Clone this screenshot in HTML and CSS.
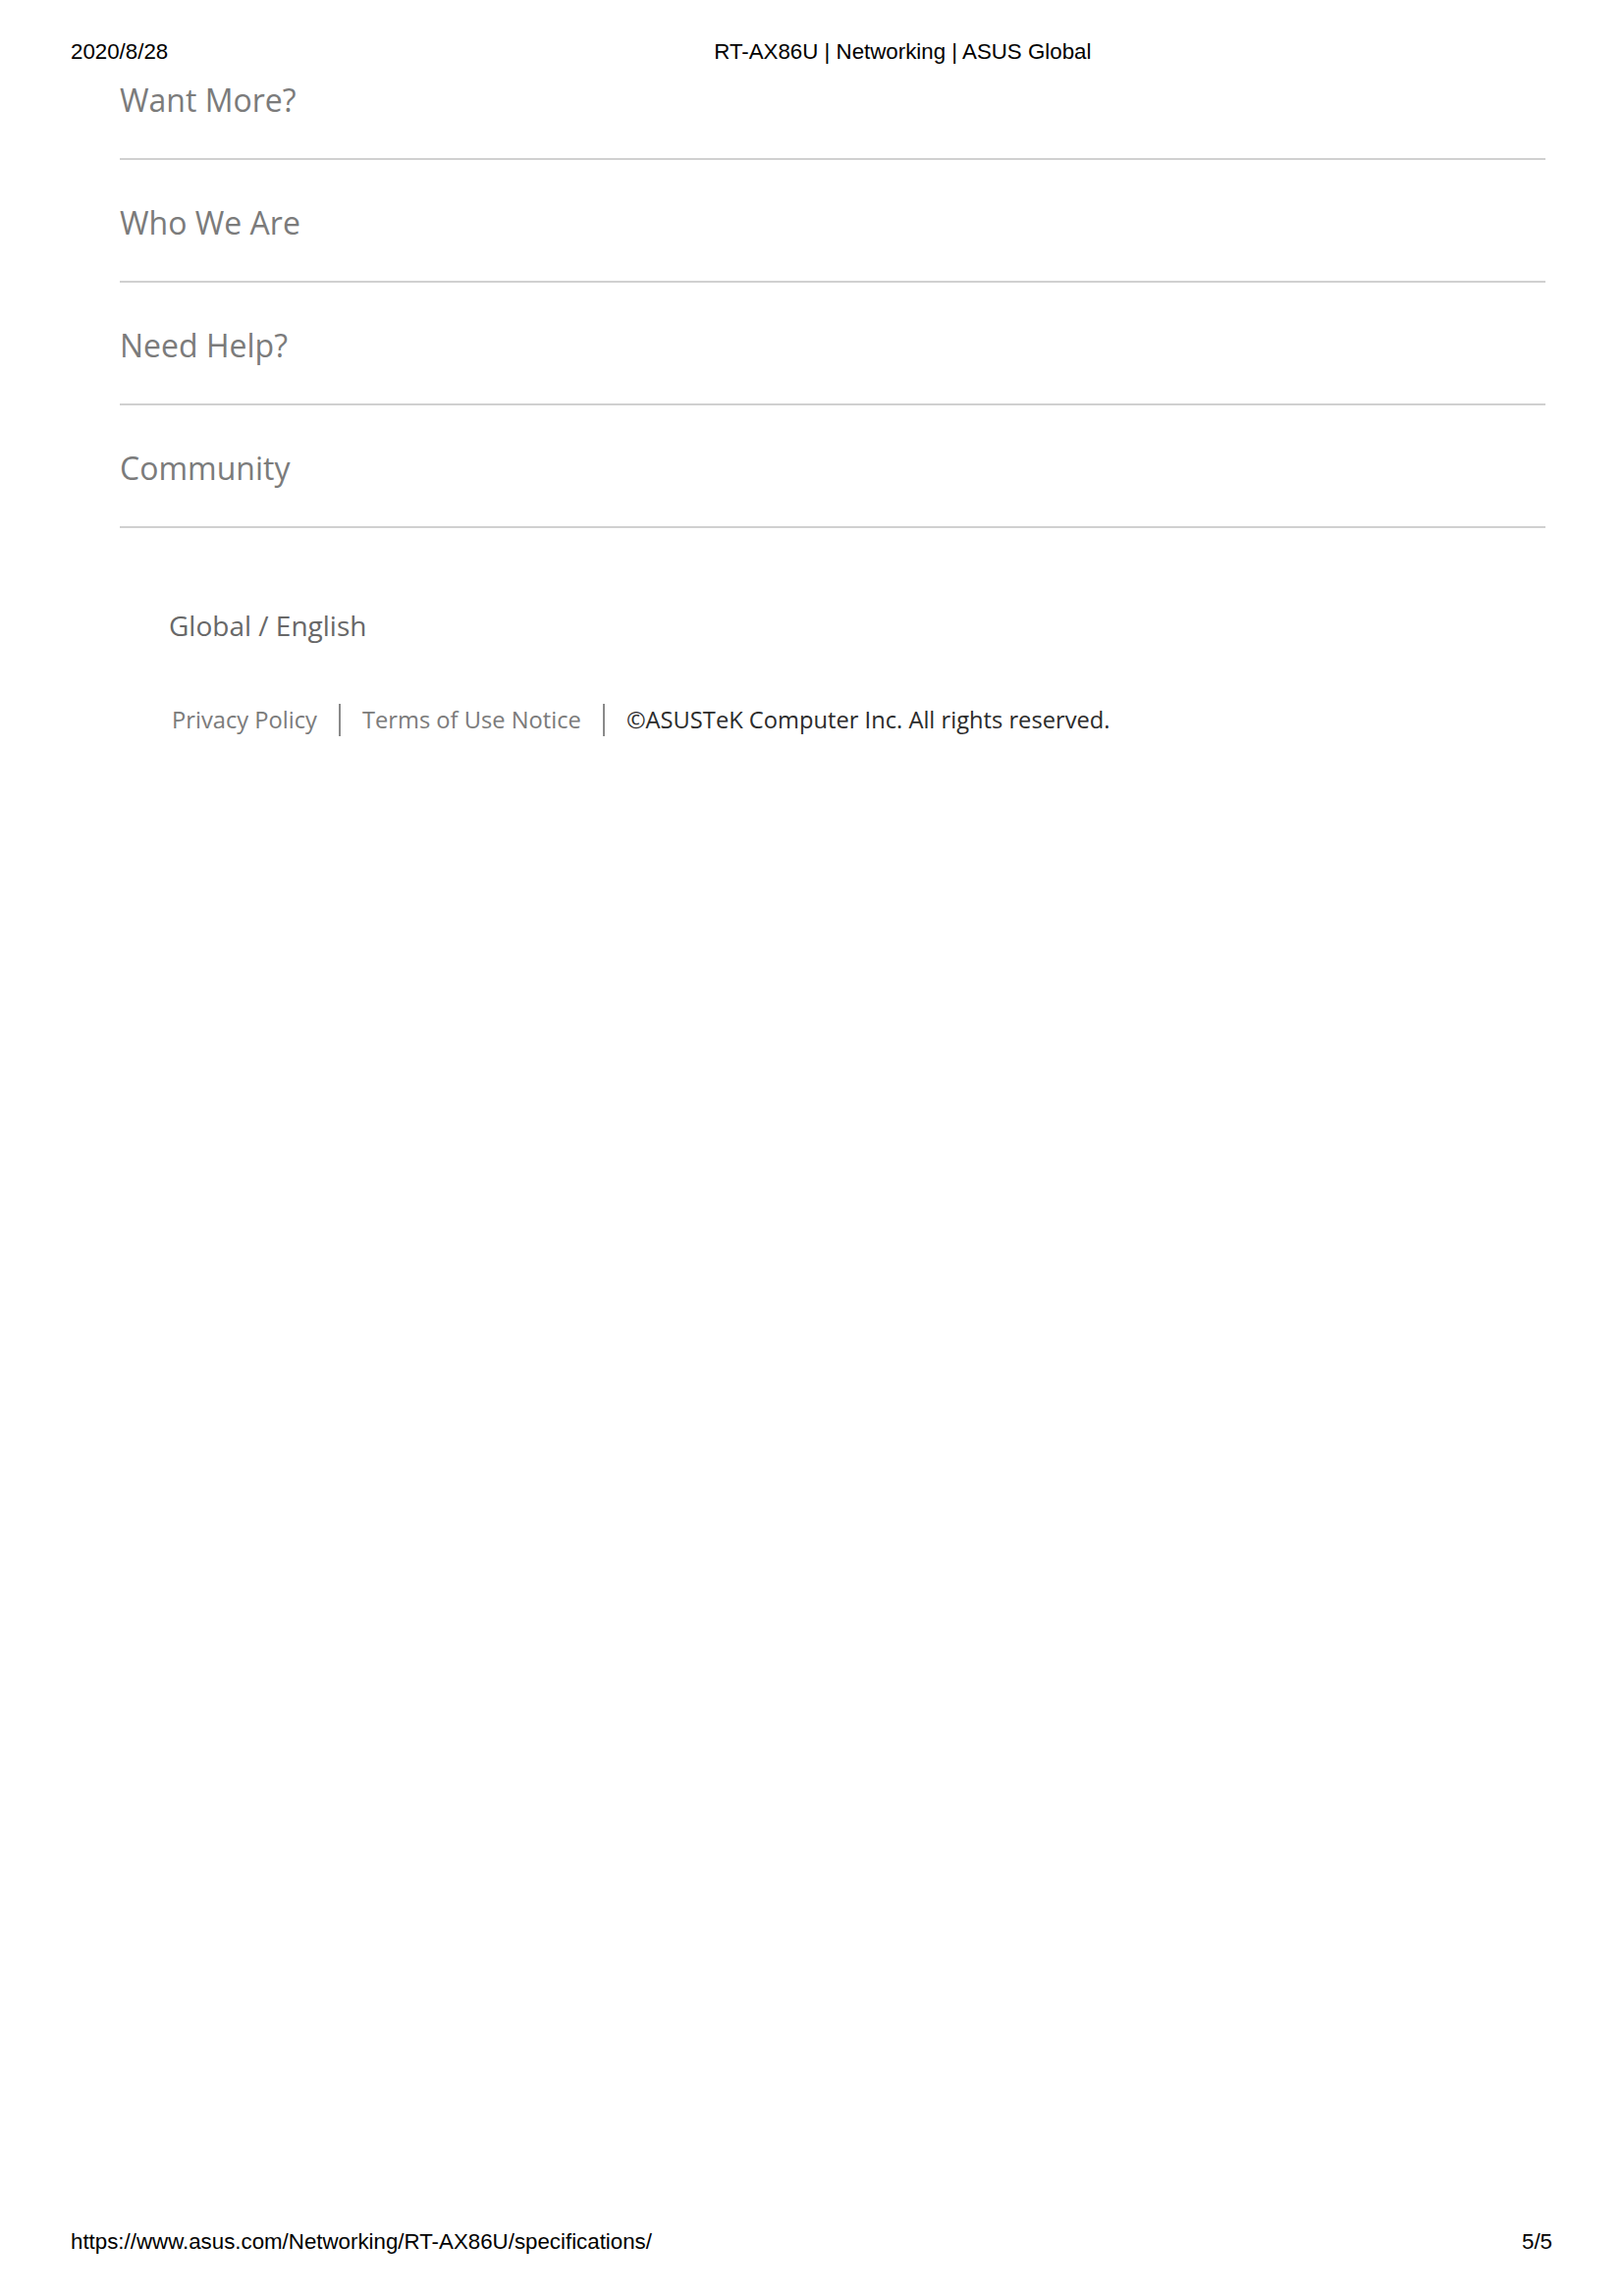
FILE: index.html
```html
<!doctype html>
<html>
  <head>
    <title>RT-AX86U | Networking | ASUS Global</title>
    <link rel="stylesheet" href="styles.css">
  </head>

  <body>
    <div class="page">

      <!--Print header-->
      <div class="print-bar print-top">
        <span class="print-date">2020/8/28</span>
        <span class="print-title">RT-AX86U | Networking | ASUS Global</span>
      </div>

      <!--Footer menu-->
      <ul class="menu">
        <li class="menu-item first">Want More?</li>
        <li class="menu-item">Who We Are</li>
        <li class="menu-item">Need Help?</li>
        <li class="menu-item">Community</li>
      </ul>

      <div class="lang">Global / English</div>

      <div class="legal">
        <a href="#" class="legal-link">Privacy Policy</a>
        <span class="sep"></span>
        <a href="#" class="legal-link">Terms of Use Notice</a>
        <span class="sep"></span>
        <span class="copyright">&copy;ASUSTeK Computer Inc. All rights reserved.</span>
      </div>

      <!--Print footer-->
      <div class="print-bar print-bottom">
        <span class="print-url">https://www.asus.com/Networking/RT-AX86U/specifications/</span>
        <span class="print-page">5/5</span>
      </div>

    </div>
  </body>
</html>
```

FILE: styles.css
```css
body {
  margin:0;
  background:#fff;
  font-family: 'Open Sans', 'Noto Sans', sans-serif;
}

.page {
  min-height:2339px;
  display:flex;
  flex-direction:column;
}

/* Print header / footer */
.print-bar {
  display:flex;
  align-items:center;
  font-family: 'Liberation Sans', Arial, sans-serif;
  font-size:22.3px;
  line-height:24px;
  color:#000;
  padding:0 73px 0 72px;
}
.print-top {
  height:62px;
  padding-top:43px;
  box-sizing:border-box;
}
.print-top .print-title {
  margin-left:556px;
}
.print-bottom {
  margin-top:auto;
  justify-content:space-between;
  padding-bottom:43px;
}

/* Menu */
.menu {
  list-style:none;
  margin:0 80px 0 122px;
  padding:0;
}
.menu-item {
  padding:42px 0 37px;
  line-height:44px;
  font-size:32px;
  color:#7b7b7b;
  border-bottom:2px solid #d0d0d0;
}
.menu-item.first {
  padding-top:18px;
}

.lang {
  margin:77px 0 0 172px;
  font-size:28px;
  line-height:44px;
  color:#686868;
}

.legal {
  display:flex;
  align-items:center;
  margin:52px 0 0 175px;
  height:44px;
}
.legal-link {
  font-size:23.7px;
  color:#7b7b7b;
  text-decoration:none;
}
.sep {
  width:2px;
  height:33px;
  background:#8a8a8a;
  margin:0 22px;
}
.copyright {
  font-size:23.7px;
  color:#2b2b2b;
}
```
